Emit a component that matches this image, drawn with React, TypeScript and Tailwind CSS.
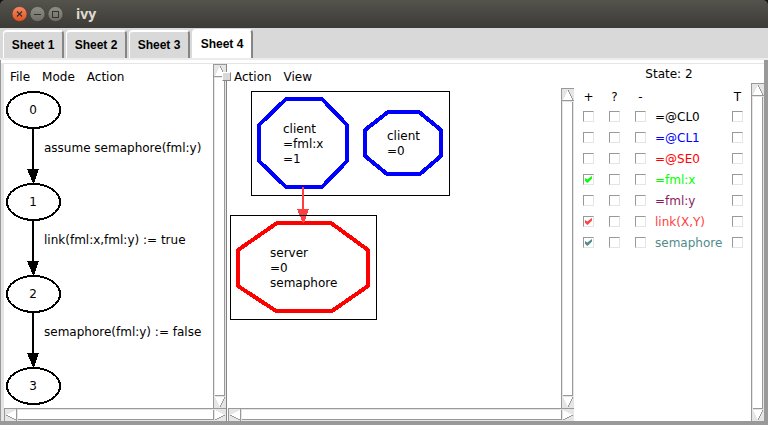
import React, { useState } from "react";

const MENU_FONT = "font-['DejaVu_Sans',sans-serif] text-[12px] leading-[15px]";

/* ---------- window chrome ---------- */

function WindowButton({ kind }: { kind: "close" | "minimize" | "maximize" }) {
  const fill = kind === "close" ? "url(#closeFill)" : "url(#plainFill)";
  return (
    <button type="button" aria-label={kind} className="block size-4">
      <svg viewBox="0 0 16 16" className="size-4">
        <defs>
          <linearGradient id="closeFill" x1="0" y1="0" x2="0" y2="1">
            <stop offset="0" stopColor="#f58a63" />
            <stop offset="1" stopColor="#e2501f" />
          </linearGradient>
          <linearGradient id="plainFill" x1="0" y1="0" x2="0" y2="1">
            <stop offset="0" stopColor="#8f8d85" />
            <stop offset="1" stopColor="#6f6d66" />
          </linearGradient>
        </defs>
        <circle cx="7.5" cy="8" r="7.5" fill={fill} stroke="#33322e" strokeWidth="0.5" />
        <g stroke="#33322e" strokeWidth="1" fill="none">
          {kind === "close" && <path d="M5 5.5 L10 10.5 M10 5.5 L5 10.5" strokeWidth="1.2" />}
          {kind === "minimize" && <path d="M4 8.5 H11" />}
          {kind === "maximize" && <rect x="4.5" y="5.5" width="6" height="6" />}
        </g>
      </svg>
    </button>
  );
}

function TitleBar() {
  return (
    <div className="h-7 shrink-0 bg-[#111]">
      <header className="flex h-7 items-center gap-[2px] rounded-t-[5px] bg-linear-to-b from-[#55534c] to-[#3c3b37] pl-[12px]">
        <WindowButton kind="close" />
        <WindowButton kind="minimize" />
        <WindowButton kind="maximize" />
        <h1 className="ml-[10px] font-['Open_Sans','Noto_Sans',sans-serif] text-[14px] leading-5 font-bold text-[#dfdbd2]">
          ivy
        </h1>
      </header>
    </div>
  );
}

/* ---------- tabs ---------- */

function Tabs() {
  const [active, setActive] = useState("Sheet 4");
  return (
    <nav role="tablist" className="flex h-8 shrink-0 items-end gap-[2px] border-b-2 border-[#ececec] bg-[#d9d9d9] pl-[3px]">
      {["Sheet 1", "Sheet 2", "Sheet 3", "Sheet 4"].map((name) => {
        const on = name === active;
        return (
          <button
            key={name}
            type="button"
            role="tab"
            aria-selected={on}
            onClick={() => setActive(name)}
            className={
              "w-[61px] rounded-t-[4px] border-t-2 border-r-2 border-l border-t-white border-r-[#858585] border-l-white text-center font-['Liberation_Sans',Arial,sans-serif] text-[12px] leading-[14px] font-bold text-black " +
              (on ? "h-[29px] bg-white pb-[2px]" : "h-7 bg-[#d9d9d9]")
            }
          >
            {name}
          </button>
        );
      })}
    </nav>
  );
}

/* ---------- scroll bars ---------- */

function Arrow({ dir }: { dir: "up" | "down" | "left" | "right" }) {
  const body = {
    up: "M6 1 L1 11 H11 Z",
    down: "M6 11 L1 1 H11 Z",
    left: "M1 6 L11 1 V11 Z",
    right: "M11 6 L1 1 V11 Z",
  }[dir];
  const shade = {
    up: "M6 1 L11 11 H0",
    down: "M6 11 L11 1",
    left: "M1 6 L11 11 V0",
    right: "M11 6 L1 11",
  }[dir];
  return (
    <button type="button" aria-label={"Scroll " + dir} className="block size-[12px] shrink-0">
      <svg viewBox="0 0 12 12" className="size-[12px]" shapeRendering="crispEdges">
        <path d={body} fill="#fff" />
        <path d={shade} fill="none" stroke="#999" />
      </svg>
    </button>
  );
}

function VScroll() {
  return (
    <div className="flex w-[13px] shrink-0 flex-col border-t border-l border-[#999] bg-[#e5e5e5]">
      <Arrow dir="up" />
      <div className="mx-px mt-px grow border-r border-b border-[#999] bg-white" />
      <Arrow dir="down" />
    </div>
  );
}

function HScroll() {
  return (
    <div className="flex h-[13px] shrink-0 border-t border-l border-[#999] bg-[#e5e5e5]">
      <Arrow dir="left" />
      <div className="my-px ml-px grow border-r border-b border-[#999] bg-white" />
      <Arrow dir="right" />
    </div>
  );
}

function MenuBar({ items }: { items: string[] }) {
  return (
    <div role="menubar" className="flex h-6 shrink-0 items-center pt-[2px]">
      {items.map((item) => (
        <button key={item} type="button" role="menuitem" className={MENU_FONT + " px-[6px]"}>
          {item}
        </button>
      ))}
    </div>
  );
}

/* ---------- state graph ---------- */

function StateGraph() {
  const edges = ["assume semaphore(fml:y)", "link(fml:x,fml:y) := true", "semaphore(fml:y) := false"];
  return (
    <svg className={"block h-80 w-full " + MENU_FONT} fill="#000">
      {edges.map((label, i) => {
        const y = 22 + i * 92;
        return (
          <g key={label}>
            <path d={`M29 ${y + 18} V${y + 60}`} stroke="#000" strokeWidth="2" shapeRendering="crispEdges" />
            <path d={`M23 ${y + 59} H35 L30 ${y + 73} H29 Z`} shapeRendering="crispEdges" />
            <text x="40" y={y + 42}>{label}</text>
          </g>
        );
      })}
      {[0, 1, 2, 3].map((n) => {
        const y = 22 + n * 92;
        return (
          <g key={n}>
            <ellipse cx="29.5" cy={y} rx="26.5" ry="18" fill="#fff" stroke="#000" strokeWidth="2" shapeRendering="crispEdges" />
            <text x="29" y={y + 4} textAnchor="middle">{n}</text>
          </g>
        );
      })}
    </svg>
  );
}

/* ---------- concept graph ---------- */

function Lines({ x, y, rows }: { x: number; y: number; rows: string[] }) {
  return (
    <>
      {rows.map((row, i) => (
        <text key={row} x={x} y={y + i * 15}>{row}</text>
      ))}
    </>
  );
}

function ConceptGraph() {
  return (
    <svg className={"block h-80 w-full " + MENU_FONT} fill="#000">
      <g fill="none" shapeRendering="crispEdges">
        <rect x="23.5" y="3.5" width="198" height="104" stroke="#000" />
        <g stroke="#0000ff" strokeWidth="4">
          <path d="M58 11 H94 L119 37 V73 L94 99 H58 L31 73 V37 Z" />
          <path d="M160 24 H191 L213 42 V68 L192 86 H159 L137 68 V42 Z" />
        </g>
        <path d="M49 135 H103 L140 162 V198 L104 223 H48 L10 198 V162 Z" stroke="#ff0000" strokeWidth="4" />
        <path d="M75 99 V122" stroke="#ff4040" strokeWidth="2" />
        <path d="M69 121 H81 L76 135 H75 Z" fill="#ff4040" />
        <rect x="2.5" y="127.5" width="146" height="104" stroke="#000" />
      </g>
      <Lines x={55} y={45} rows={["client", "=fml:x", "=1"]} />
      <Lines x={159} y={52} rows={["client", "=0"]} />
      <Lines x={42} y={169} rows={["server", "=0", "semaphore"]} />
    </svg>
  );
}

/* ---------- relation table ---------- */

type Relation = { name: string; color: string; on: boolean };

const RELATIONS: Relation[] = [
  { name: "=@CL0", color: "text-[#000000]", on: false },
  { name: "=@CL1", color: "text-[#0000ff]", on: false },
  { name: "=@SE0", color: "text-[#ff0000]", on: false },
  { name: "=fml:x", color: "text-[#00ff00]", on: true },
  { name: "=fml:y", color: "text-[#8b1c62]", on: false },
  { name: "link(X,Y)", color: "text-[#ff4040]", on: true },
  { name: "semaphore", color: "text-[#528b8b]", on: true },
];

function Check({ label, checked = false }: { label: string; checked?: boolean }) {
  return (
    <label className="grid size-[11px]">
      <input
        type="checkbox"
        aria-label={label}
        defaultChecked={checked}
        className="peer col-start-1 row-start-1 size-[11px] appearance-none border border-t-[#999] border-r-[#e5e5e5] border-b-[#e5e5e5] border-l-[#999] bg-white"
      />
      <svg viewBox="0 0 11 11" className="pointer-events-none invisible col-start-1 row-start-1 size-[11px] peer-checked:visible">
        <path d="M2 4 L4.3 5.6 L9 2 V4.5 L4.8 8.8 H4 L2 6.8 Z" fill="currentColor" />
      </svg>
    </label>
  );
}

function RelationTable() {
  return (
    <table className="mt-[2px] w-full table-fixed border-collapse self-start">
      <colgroup>
        <col className="w-[27px]" />
        <col className="w-[26px]" />
        <col className="w-[26px]" />
        <col />
        <col className="w-[27px]" />
      </colgroup>
      <thead>
        <tr className="h-[21px]">
          {["+", "?", "-", "", "T"].map((h, i) => (
            <th key={i} className={"p-0 pt-[4px] font-normal " + (i === 0 ? "pl-[9px]" : "pl-[8px]")}>
              <span className="flex w-[11px] justify-center">{h}</span>
            </th>
          ))}
        </tr>
      </thead>
      <tbody>
        {RELATIONS.map((r) => (
          <tr key={r.name} className={"h-[21px] " + r.color}>
            <td className="p-0 pl-[9px]"><Check label={r.name + " +"} checked={r.on} /></td>
            <td className="p-0 pl-[8px]"><Check label={r.name + " ?"} /></td>
            <td className="p-0 pl-[8px]"><Check label={r.name + " -"} /></td>
            <td className="p-0 pt-[2px] pl-[2px]">{r.name}</td>
            <td className="p-0 pl-[8px]"><Check label={r.name + " T"} /></td>
          </tr>
        ))}
      </tbody>
    </table>
  );
}

/* ---------- page ---------- */

export default function App() {
  return (
    <div className={"flex min-h-screen flex-col bg-white text-black " + MENU_FONT}>
      <TitleBar />
      <Tabs />
      <div className="flex grow flex-col border-r-4 border-b-4 border-l border-[#999]">
        <div className="h-[3px] shrink-0 bg-white" />
        <main className="flex grow border-t border-l-[3px] border-[#e5e5e5]">
          <section className="flex w-[222px] shrink-0 flex-col">
            <div className="flex grow">
              <div className="flex min-w-0 grow flex-col">
                <MenuBar items={["File", "Mode", "Action"]} />
                <StateGraph />
              </div>
              <VScroll />
            </div>
            <HScroll />
          </section>

          <div className="relative w-[2px] shrink-0 border-l border-[#858585] bg-white">
            <span className="absolute top-2 -left-[5px] size-[9px] border border-t-white border-r-[#858585] border-b-[#858585] border-l-white bg-[#d9d9d9]" />
          </div>

          <section className="flex min-w-0 grow flex-col">
            <MenuBar items={["Action", "View"]} />
            <div className="flex grow">
              <div className="min-w-0 grow">
                <ConceptGraph />
              </div>
              <VScroll />
            </div>
            <HScroll />
          </section>

          <section className="flex w-[190px] shrink-0 flex-col">
            <h2 className="h-[19px] pt-[3px] text-center">State: 2</h2>
            <div className="flex grow">
              <RelationTable />
              <VScroll />
            </div>
          </section>
        </main>
      </div>
    </div>
  );
}
